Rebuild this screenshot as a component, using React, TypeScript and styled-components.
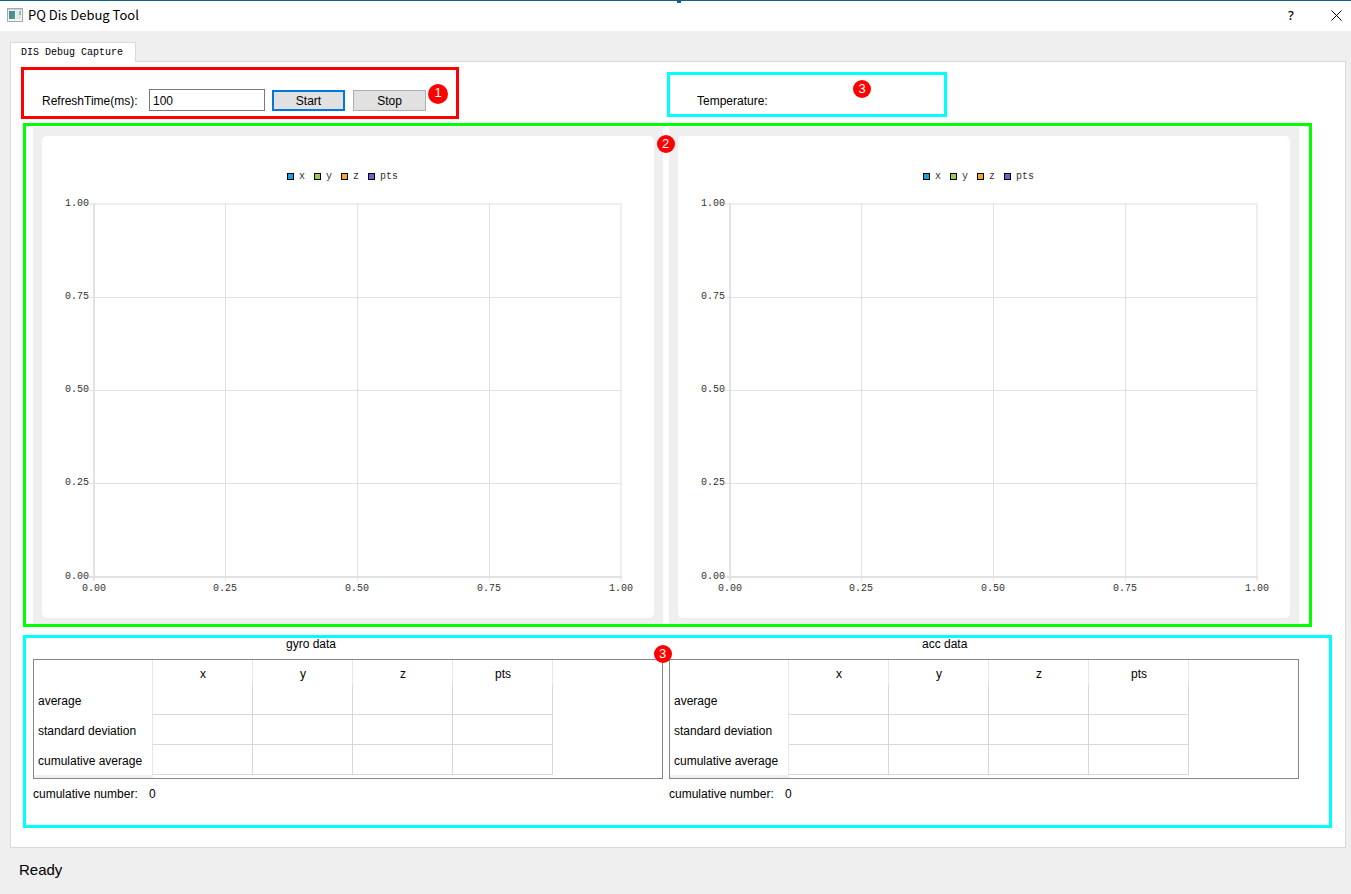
import React from "react";
import styled, { createGlobalStyle } from "styled-components";

const SANS = '"Liberation Sans", Arial, sans-serif';
const MONO = '"Liberation Mono", "Courier New", monospace';

const GlobalStyle = createGlobalStyle`
  *, *::before, *::after { box-sizing: border-box; }
  body {
    margin: 0;
    background: #efefef;
    color: #000;
    font: 12px/14px ${SANS};
  }
`;

const Window = styled.div`
  display: flex;
  flex-direction: column;
  min-height: 100vh;
  border-top: 1px solid #11608a;
  position: relative;
`;

const EdgeMark = styled.span`
  position: absolute;
  top: -1px;
  left: calc(50% + 1px);
  width: 4px;
  height: 3px;
  background: #11608a;
`;

const TitleBar = styled.header`
  display: flex;
  align-items: center;
  height: 30px;
  padding: 0 9px 2px 7px;
  background: #fff;
`;

const Title = styled.h1`
  flex: 1;
  margin: 0 0 0 5px;
  font: 400 13px/18px "Noto Sans CJK SC", "Noto Sans", sans-serif;
`;

const CaptionButton = styled.button`
  display: flex;
  align-items: center;
  justify-content: center;
  width: 12px;
  height: 20px;
  margin-left: 33px;
  padding: 0;
  border: 0;
  background: none;
  color: #000;
  font: 500 13px/16px "Noto Sans", sans-serif;
`;

const TabBar = styled.nav`
  display: flex;
  padding: 11px 5px 0 10px;
`;

const Tab = styled.button`
  position: relative;
  z-index: 1;
  height: 20px;
  margin-bottom: -1px;
  padding: 0 12px 0 10px;
  border: 1px solid #d9d9d9;
  border-bottom: 0;
  background: #fff;
  color: #000;
  font: 400 10px/18px ${MONO};
`;

const Panel = styled.main`
  margin: 0 5px 0 10px;
  padding: 5px 13px 19px 10px;
  border: 1px solid #d9d9d9;
  background: #fff;
`;

const Toolbar = styled.div`
  display: grid;
  grid-template-columns: 1fr 1fr;
  align-items: start;
  margin-right: 19px;
  height: 56px;
`;

const Marked = styled.section<{ $color: string }>`
  position: relative;
  border: 3px solid ${(p) => p.$color};
`;

const RefreshBox = styled(Marked)`
  display: flex;
  align-items: center;
  width: 438px;
  padding: 19px 0 5px 18px;
`;

const RefreshLabel = styled.label`
  width: 107px;
  padding-top: 2px;
`;

const TimeInput = styled.input`
  width: 116px;
  height: 22px;
  margin-right: 7px;
  padding: 2px 3px 0;
  border: 1px solid #7a7a7a;
  background: #fff;
  color: #000;
  font: 12px ${SANS};
`;

const PushButton = styled.button<{ $primary?: boolean }>`
  width: 73px;
  height: 21px;
  margin: 1px 8px 0 0;
  padding: 0;
  border: ${(p) => (p.$primary ? "2px solid #0078d7" : "1px solid #adadad")};
  background: #e1e1e1;
  color: #000;
  font: 12px ${SANS};
`;

const TemperatureBox = styled(Marked)`
  width: 280px;
  margin-top: 5px;
  padding: 19px 0 6px 27px;
`;

const Badge = styled.span<{ $x: string; $y: number; $size?: number }>`
  position: absolute;
  left: ${(p) => p.$x};
  top: ${(p) => p.$y}px;
  width: ${(p) => p.$size ?? 18}px;
  height: ${(p) => p.$size ?? 18}px;
  border-radius: 50%;
  background: #f00;
  color: #fff;
  font: 13px/18px ${SANS};
  text-align: center;
`;

const ChartsBox = styled(Marked)`
  display: grid;
  grid-template-columns: 1fr 1fr;
  gap: 6px;
  margin: 0 20px 0 2px;
  padding: 1px 10px 0 7px;
`;

const ChartView = styled.div`
  padding: 9px 9px 6px;
  background: #efefef;
`;

const ChartSvg = styled.svg`
  display: block;
  width: 100%;
  height: auto;
  border-radius: 5px;
  background: #fff;
  font: 10px ${MONO};
  fill: #333;
`;

const DataBox = styled(Marked)`
  display: grid;
  grid-template-columns: 1fr 1fr;
  gap: 6px;
  margin: 8px 0 0 2px;
  padding: 0 30px 24px 7px;
`;

const DataTitle = styled.h2`
  margin: 0 0 8px;
  padding-left: calc(40% + 1px);
  font-size: 12px;
  line-height: 13px;
  font-weight: 400;
`;

const TableFrame = styled.div`
  border: 1px solid #828790;
`;

const StatsTable = styled.table`
  width: 519px;
  table-layout: fixed;
  border-collapse: separate;
  border-spacing: 0;
`;

const ColumnHeader = styled.th`
  width: 100px;
  height: 25px;
  padding: 2px 0 0 1px;
  border-right: 1px solid #e5e5e5;
  font-weight: 400;
  text-align: center;
`;

const CornerCell = styled.td`
  width: 119px;
  padding: 0;
  border-right: 1px solid #e5e5e5;
`;

const RowHeader = styled.th`
  height: 30px;
  padding: 2px 0 0 4px;
  border-right: 1px solid #e5e5e5;
  font-weight: 400;
  text-align: left;
`;

const Cell = styled.td`
  padding: 0;
  border-right: 1px solid #d8d8d8;
  border-bottom: 1px solid #d8d8d8;
`;

const HeaderTail = styled.div`
  width: 119px;
  height: 3px;
  background: #efefef;
`;

const CumulativeLine = styled.p`
  display: flex;
  margin: 8px 0 0;
`;

const CumulativeLabel = styled.span`
  width: 116px;
`;

const StatusBar = styled.footer`
  padding: 13px 19px;
  font-size: 15px;
  line-height: 18px;
`;

const AppIcon = () => (
  <svg width="16" height="14" viewBox="0 0 16 14" aria-hidden="true">
    <defs>
      <linearGradient id="pane" x1="0" y1="0" x2="1" y2="1">
        <stop offset="0" stopColor="#4a7fae" />
        <stop offset="1" stopColor="#4ea27c" />
      </linearGradient>
    </defs>
    <rect x="0.5" y="0.5" width="15" height="13" fill="#f4f4f4" stroke="#a4a9ad" />
    <rect x="1" y="1" width="14" height="1" fill="#c9ced2" />
    <rect x="2" y="3" width="6" height="8" fill="url(#pane)" />
    <rect x="9" y="3" width="3" height="8" fill="#e6e9eb" />
    <rect x="12" y="3" width="2" height="4" fill="#8fbfae" />
    <rect x="12" y="7" width="2" height="4" fill="#dbe3e6" />
  </svg>
);

const SERIES = [
  { name: "x", color: "#209fdf" },
  { name: "y", color: "#99ca53" },
  { name: "z", color: "#f6a625" },
  { name: "pts", color: "#6d5fd5" },
];
const TICKS = [1, 0, 0.25, 0.5, 0.75];
const PLOT = { left: 52, right: 579, top: 68, bottom: 441 };

const Chart = ({ label }: { label: string }) => (
  <ChartView>
    <ChartSvg viewBox="0 0 612 482" role="img" aria-label={label}>
      {SERIES.map((s, i) => (
        <g key={s.name}>
          <rect x={245.5 + i * 27} y="37.5" width="6" height="6" fill={s.color} stroke="#000" />
          <text x={257 + i * 27} y="43">{s.name}</text>
        </g>
      ))}
      {TICKS.map((t) => {
        const x = Math.floor(PLOT.left + t * (PLOT.right - PLOT.left));
        const y = Math.floor(PLOT.bottom - t * (PLOT.bottom - PLOT.top));
        const edge = t === 0 || t === 1;
        const xStart = edge ? x - 1 : x;
        const yStart = edge ? y - 1 : y;
        const thickness = edge ? 2 : 1;
        const color = t === 1 ? "#eeeeee" : "#e2e2e2";
        return (
          <g key={t}>
            <rect x={xStart} y={PLOT.top - 1} width={thickness} height={PLOT.bottom - PLOT.top + 5} fill={color} />
            <rect x={PLOT.left - 5} y={yStart} width={PLOT.right - PLOT.left + 6} height={thickness} fill={color} />
            <text x={x} y="455" textAnchor="middle">{t.toFixed(2)}</text>
            <text x="47" y={y + 2} textAnchor="end">{t.toFixed(2)}</text>
          </g>
        );
      })}
    </ChartSvg>
  </ChartView>
);

const COLUMNS = ["x", "y", "z", "pts"];
const ROWS = ["average", "standard deviation", "cumulative average"];

const Stats = ({ title }: { title: string }) => (
  <div>
    <DataTitle>{title}</DataTitle>
    <TableFrame>
      <StatsTable aria-label={title}>
        <thead>
          <tr>
            <CornerCell />
            {COLUMNS.map((c) => (
              <ColumnHeader key={c} scope="col">{c}</ColumnHeader>
            ))}
          </tr>
        </thead>
        <tbody>
          {ROWS.map((r) => (
            <tr key={r}>
              <RowHeader scope="row">{r}</RowHeader>
              {COLUMNS.map((c) => (
                <Cell key={c} />
              ))}
            </tr>
          ))}
        </tbody>
      </StatsTable>
      <HeaderTail />
    </TableFrame>
    <CumulativeLine>
      <CumulativeLabel>cumulative number:</CumulativeLabel>
      <span>0</span>
    </CumulativeLine>
  </div>
);

export default function App() {
  return (
    <Window>
      <GlobalStyle />
      <EdgeMark />
      <TitleBar>
        <AppIcon />
        <Title>PQ Dis Debug Tool</Title>
        <CaptionButton aria-label="Help">?</CaptionButton>
        <CaptionButton aria-label="Close">
          <svg width="11" height="11" viewBox="0 0 11 11" stroke="#000" fill="none">
            <path d="M0.5 0.5 L10.5 10.5 M10.5 0.5 L0.5 10.5" />
          </svg>
        </CaptionButton>
      </TitleBar>
      <TabBar>
        <Tab>DIS Debug Capture</Tab>
      </TabBar>
      <Panel>
        <Toolbar>
          <RefreshBox $color="#f00">
            <RefreshLabel htmlFor="refresh">RefreshTime(ms):</RefreshLabel>
            <TimeInput id="refresh" defaultValue="100" />
            <PushButton $primary>Start</PushButton>
            <PushButton>Stop</PushButton>
            <Badge $x="404px" $y={14} $size={20}>1</Badge>
          </RefreshBox>
          <TemperatureBox $color="#0ff">
            Temperature:
            <Badge $x="183px" $y={5}>3</Badge>
          </TemperatureBox>
        </Toolbar>
        <ChartsBox $color="#0f0">
          <Chart label="gyro chart" />
          <Chart label="acc chart" />
          <Badge $x="calc(50% - 11px)" $y={9}>2</Badge>
        </ChartsBox>
        <DataBox $color="#0ff">
          <Stats title="gyro data" />
          <Stats title="acc data" />
          <Badge $x="calc(50% - 24px)" $y={7}>3</Badge>
        </DataBox>
      </Panel>
      <StatusBar>Ready</StatusBar>
    </Window>
  );
}
